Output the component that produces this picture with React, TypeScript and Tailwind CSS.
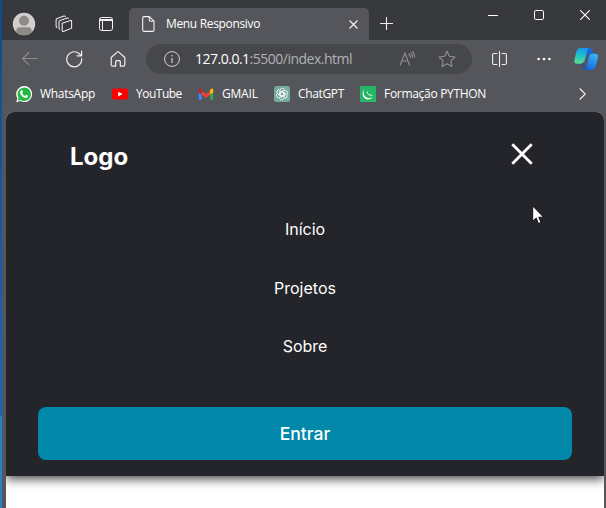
import React from "react";

const ui = "font-['Open_Sans','Noto_Sans',sans-serif] whitespace-nowrap";

function TitleBar() {
  return (
    <div className="flex h-10 bg-[#38393d] text-white">
      <svg className="ml-[10px] mt-3 h-6 w-6 shrink-0" viewBox="0 0 24 24">
        <defs>
          <clipPath id="avatar">
            <circle cx="12" cy="12" r="11.2" />
          </clipPath>
        </defs>
        <g clipPath="url(#avatar)">
          <rect width="24" height="24" fill="#d1cfcd" />
          <circle cx="12" cy="8.7" r="5" fill="#8d8a88" />
          <path d="M4.3 24v-5a3.7 3.7 0 0 1 3.7-3.7h8a3.7 3.7 0 0 1 3.7 3.7v5z" fill="#8d8a88" />
        </g>
      </svg>
      <svg className="ml-[19px] mt-[15px] h-[18px] w-[18px] shrink-0" viewBox="0 0 18 18" fill="none" stroke="#e8e8e8" strokeWidth="1.1" strokeLinejoin="round" strokeLinecap="round">
        <path d="M7.2 8.2 15.4 5.4Q16.6 5.1 16.6 6.3V12.2Q16.6 13.2 15.7 13.6L9 16.3Q7.2 17 7.2 15.3Z" />
        <path d="M4.6 14.4Q4 14 4 13V7.2Q4 6 5.2 5.6L12 3.1Q13 2.8 13.5 3.4" />
        <path d="M1.8 12.5Q1.1 12 1.1 11V5.2Q1.1 4 2.3 3.5L8.8 1.1Q9.8.8 10.3 1.4" />
      </svg>
      <svg className="ml-[26px] mt-[17px] h-[15px] w-[15px] shrink-0" viewBox="0 0 15 15" fill="none" stroke="#f4f4f4">
        <rect x=".5" y=".5" width="13" height="13" rx="2" />
        <path d="M1 2.5h12M1 3.5h12M3.5 3v10.5" />
      </svg>
      <div className="ml-[15px] mt-2 flex h-8 w-[240px] shrink-0 items-start rounded-t-[5px] bg-[#55565b]">
        <svg className="ml-[13px] mt-2 h-4 w-[13px] shrink-0" viewBox="0 0 13 16" fill="none" stroke="#f2f2f2" strokeWidth="1.1" strokeLinejoin="round">
          <path d="M.7 2Q.7.6 2.1.6H7.3L12 5.2V14Q12 15.4 10.6 15.4H2.1Q.7 15.4.7 14ZM7.3.6V4Q7.3 5.2 8.5 5.2H12" />
        </svg>
        <span className={`${ui} ml-[11px] mt-2 w-[94px] text-[12px] leading-4 tracking-[-0.34px]`}>Menu Responsivo</span>
        <svg className="ml-[89px] mt-3 h-[9px] w-[9px] shrink-0" viewBox="0 0 9 9" stroke="#eee" strokeWidth="1.2">
          <path d="m.5.5 8 8m0-8-8 8" />
        </svg>
      </div>
      <svg className="ml-[11px] mt-[17px] h-[14px] w-[14px] shrink-0" viewBox="0 0 14 14" stroke="#eee" strokeWidth="1.1">
        <path d="M6.5 0v13M0 6.5h13" />
      </svg>
      <svg className="ml-[94px] mt-[10px] h-[10px] w-[10px] shrink-0" viewBox="0 0 10 10" stroke="#fff">
        <path d="M0 5.5h10" />
      </svg>
      <svg className="ml-[36px] mt-[10px] h-[10px] w-[10px] shrink-0" viewBox="0 0 10 10" fill="none" stroke="#fff">
        <rect x=".5" y=".5" width="9" height="9" rx="1.3" />
      </svg>
      <svg className="ml-[36px] mt-[10px] h-[10px] w-[10px] shrink-0" viewBox="0 0 10 10" stroke="#fff" strokeWidth="1.1">
        <path d="m.2.2 9.6 9.6m0-9.6L.2 9.8" />
      </svg>
    </div>
  );
}

function AddressRow() {
  return (
    <div className="flex h-[38px] items-center">
      <svg className="ml-[20px] h-[14px] w-4 shrink-0" viewBox="0 0 16 14" fill="none" stroke="#8a8b8f" strokeWidth="1.1" strokeLinejoin="round" strokeLinecap="round">
        <path d="M15.5 6.5H.6M7 .5.6 6.5 7 12.8" />
      </svg>
      <svg className="ml-[28px] h-[18px] w-[17px] shrink-0" viewBox="0 0 17 18" fill="none" stroke="#f0f0f0" strokeWidth="1.2" strokeLinecap="round" strokeLinejoin="round">
        <path d="M15.7 8.5A7.5 7.5 0 1 1 13 3.5L15.4 5.6M15.6 1.1V5.8H11" />
      </svg>
      <svg className="ml-[27px] h-4 w-4 shrink-0" viewBox="0 0 16 16" fill="none" stroke="#f0f0f0" strokeWidth="1.2" strokeLinejoin="round">
        <path d="M1.2 6.5 7.2 1.1Q8 .5 8.8 1.1L14.8 6.5V13.8Q14.8 15.2 13.4 15.2H10.3V10.8Q10.3 9.7 9.2 9.7H6.8Q5.7 9.7 5.7 10.8V15.2H2.6Q1.2 15.2 1.2 13.8Z" />
      </svg>
      <div className="ml-[20px] flex h-[30px] w-[326px] shrink-0 items-center rounded-full bg-[#46474b]">
        <svg className="ml-[18px] h-4 w-4 shrink-0" viewBox="0 0 16 16" fill="none" stroke="#d2d2d4">
          <circle cx="8" cy="8" r="7.4" />
          <path d="M8 7v5" strokeWidth="1.2" />
          <circle cx="8" cy="4.7" r=".8" fill="#d2d2d4" stroke="none" />
        </svg>
        <span className={`${ui} ml-[15px] w-[158px] text-[14px] leading-5 tracking-[-0.5px] text-[#b1b2b5]`}>
          <span className="text-white">127.0.0.1</span>:5500/index.html
        </span>
        <svg className="ml-[46px] h-4 w-[17px] shrink-0" viewBox="0 0 17 16" fill="none" stroke="#909195" strokeWidth="1.1" strokeLinecap="round">
          <path d="M1.2 14 5.9 2 10.5 14M2.8 10h6.2M9.8 3q1.5 1.5 1.5 3.6M11.9 1.8q1.6 2 1.6 4.8M13.7.7q2 2.3 2 5.3" />
        </svg>
        <svg className="ml-[22px] h-[18px] w-[18px] shrink-0" viewBox="0 0 18 18" fill="none" stroke="#909195" strokeWidth="1.1" strokeLinejoin="round">
          <path d="m9 1.2 2.4 5 5.5.8-4 3.9 1 5.5L9 13.8l-4.9 2.6 1-5.5-4-3.9 5.5-.8z" />
        </svg>
      </div>
      <svg className="ml-[20px] h-4 w-[15px] shrink-0" viewBox="0 0 15 16" fill="none" stroke="#eee" strokeWidth="1.1">
        <path d="M5.4 2.5H2Q.6 2.5.6 4v8Q.6 13.5 2 13.5h3.4M9.6 2.5H13q1.4 0 1.4 1.5v8q0 1.5-1.4 1.5H9.6M7.5 0v16" />
      </svg>
      <svg className="ml-[30px] h-1 w-[14px] shrink-0" viewBox="0 0 14 4" fill="#fff">
        <circle cx="1.6" cy="2" r="1.3" />
        <circle cx="7" cy="2" r="1.3" />
        <circle cx="12.4" cy="2" r="1.3" />
      </svg>
      <svg className="ml-[23px] h-6 w-6 shrink-0" viewBox="0 0 24 24">
        <defs>
          <linearGradient id="copilotA" x1=".4" y1="0" x2=".3" y2="1">
            <stop stopColor="#1798ea" />
            <stop offset=".5" stopColor="#1fc3c5" />
            <stop offset="1" stopColor="#62dc87" />
          </linearGradient>
          <linearGradient id="copilotB" x1=".7" y1="0" x2=".3" y2="1">
            <stop stopColor="#36b5f4" />
            <stop offset=".55" stopColor="#268aed" />
            <stop offset="1" stopColor="#1262d2" />
          </linearGradient>
        </defs>
        <path d="M13 1h2.5Q18 1 18.5 3L19.4 6.7H14L11 14z" fill="#1768d8" />
        <path d="M6.8 1H15Q13.8 1.5 13.2 4L10.5 14Q9.7 16.8 7 16.8H3Q-.2 16.8.4 13L2.4 4.5Q3.3 1 6.8 1Z" fill="url(#copilotA)" />
        <path d="M6 17q3 0 4-3L8.5 20Q9.3 23 12 23h3z" fill="#164ec2" />
        <path d="M17.2 6.8h4.1Q24.7 6.8 24 10.5L21.6 19.5Q20.5 23 17.3 23H9.6q2-.6 2.7-3l2.5-9.3q1-3.9 2.4-3.9Z" fill="url(#copilotB)" />
      </svg>
    </div>
  );
}

function Bookmarks() {
  const label = `${ui} text-[12px] leading-4 text-white`;
  return (
    <div className="flex h-[34px] items-start pt-2">
      <div className="ml-[14px] flex w-[96px] shrink-0 gap-2">
        <svg className="h-[17px] w-4 shrink-0" viewBox="0 0 16 17">
          <path d="M.2 16.3 1.4 12.3A8 8 0 1 1 4.4 15.1Z" fill="#fff" />
          <path d="m1.8 14.8.8-3A6.7 6.7 0 1 1 4.7 13.9Z" fill="#24b943" />
          <path d="M5.4 4.3q.6-.5 1 .2l.6 1.5-.8 1.2q1 2 2.9 2.7l.9-1.1 2 .9q-.1 2-1.8 2.2C6.8 12 3.9 8.6 4.1 6.5q.1-1.4 1.3-2.2Z" fill="#fff" />
        </svg>
        <span className={`${label} tracking-[-0.3px]`}>WhatsApp</span>
      </div>
      <div className="flex w-[86px] shrink-0 gap-2">
        <svg className="h-4 w-4 shrink-0" viewBox="0 0 16 16">
          <rect y="2.5" width="16" height="11" rx="2" fill="#f00" />
          <path d="m6.2 5.7 4.4 2.3-4.4 2.4z" fill="#fff" />
        </svg>
        <span className={`${label} tracking-[-0.5px]`}>YouTube</span>
      </div>
      <div className="flex w-[76px] shrink-0 gap-2">
        <svg className="h-4 w-4 shrink-0" viewBox="0 0 16 16">
          <path d="M.8 4v9.8h3.1V7z" fill="#4285f4" />
          <path d="M12.1 7v6.8h3.1V4z" fill="#34a853" />
          <path d="m3.8 4.8 4.2 3.1 4.2-3.1v3.9L8 11.9 3.8 8.7z" fill="#ea4335" />
          <path d="M.8 4.2Q.8 1.4 3.9 3.4v5.2L.8 6.6z" fill="#c5221f" />
          <path d="M15.2 4.2q0-2.8-3.1-.8v5.2l3.1-2z" fill="#fbbc04" />
        </svg>
        <span className={`${label} tracking-[-0.2px]`}>GMAIL</span>
      </div>
      <div className="flex w-[86px] shrink-0 gap-2">
        <svg className="h-4 w-4 shrink-0" viewBox="0 0 16 16" fill="none">
          <rect width="16" height="16" rx="2.5" fill="#74aa9c" />
          <g stroke="#fff" strokeWidth=".85">
            {[0, 60, 120, 180, 240, 300].map((a) => (
              <path key={a} transform={`rotate(${a} 8 8)`} d="M6 9.2V4.6a2.6 2.6 0 0 1 4.6-1.4M6 6.8 9.8 4.6" />
            ))}
          </g>
        </svg>
        <span className={`${label} tracking-[-0.35px]`}>ChatGPT</span>
      </div>
      <div className="flex w-[126px] shrink-0 gap-2">
        <svg className="h-4 w-4 shrink-0" viewBox="0 0 16 16">
          <rect width="16" height="16" fill="#27b567" />
          <path d="M4.6 3C2.8 6 3.6 10 6.6 11.5q3 1.6 5.9-.8-1.6 3.2-5.2 2.7C2.2 12.5 1.2 6.4 4.6 3Z" fill="#fff" />
          <path d="M7.2 5.6q.1 3.9 5.1 3.7" fill="none" stroke="#e8faef" />
        </svg>
        <span className={`${label} tracking-[-0.3px]`}>Formação PYTHON</span>
      </div>
      <svg className="ml-[93px] h-3 w-[7px] shrink-0 self-start translate-y-[2px]" viewBox="0 0 7 12" fill="none" stroke="#eee" strokeWidth="1.2">
        <path d="m.7.5 5.5 5.5-5.5 5.5" />
      </svg>
    </div>
  );
}

function Page() {
  return (
    <main className="ml-1 h-[396px] w-[598px] overflow-hidden rounded-t-[8px] bg-white font-[Inter,sans-serif] text-white">
      <header className="h-[364px] bg-[#24252a] px-8 shadow-[0_3px_10px_#464646]">
        <div className="flex h-[88px] items-start justify-between pl-8 pr-[39px] pt-[30px]">
          <h1 className="text-[24px] font-bold leading-[29px]">Logo</h1>
          <svg className="mt-[1px] h-[22px] w-[22px]" viewBox="0 0 22 22" stroke="#fff" strokeWidth="2.8">
            <path d="m1.3 1.3 19.4 19.4m0-19.4L1.3 20.7" />
          </svg>
        </div>
        <nav className="flex flex-col items-center text-[16px] leading-[58.5px]">
          <a>Início</a>
          <a>Projetos</a>
          <a>Sobre</a>
        </nav>
        <button className="mt-[31px] flex h-[53px] w-full items-center justify-center rounded-[8px] bg-[#0288a9] pt-[2px] text-[17.6px] font-medium">Entrar</button>
      </header>
    </main>
  );
}

export default function App() {
  return (
    <div className="relative flex h-[508px] w-[606px] overflow-hidden bg-[#55565b]">
      <div className="flex w-[2px] shrink-0 flex-col">
        <div className="h-[416px] bg-linear-to-b from-[#124a8c] to-[#1768b8]" />
        <div className="flex-1 bg-[#2682c3]" />
      </div>
      <div className="w-[604px] shrink-0">
        <TitleBar />
        <AddressRow />
        <Bookmarks />
        <Page />
      </div>
      <svg className="absolute left-[532px] top-[205px] h-[20px] w-[13px]" viewBox="0 0 13 20">
        <path d="M.7 1v15.2l3.5-3.3 2.3 5.6 2.5-1-2.3-5.3h4.8z" fill="#fff" stroke="#000" strokeWidth=".8" />
      </svg>
    </div>
  );
}
